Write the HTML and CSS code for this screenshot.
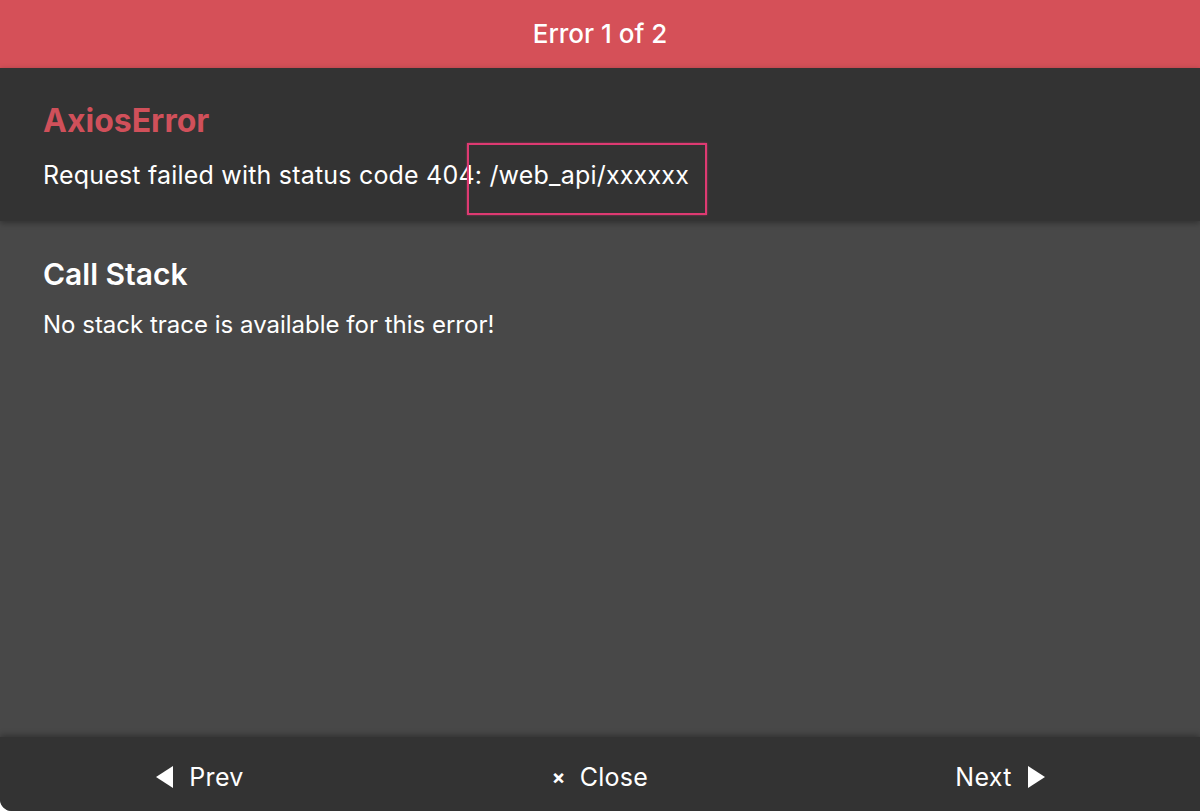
FILE: index.html
```html
<!DOCTYPE html>
<html>
<head>
<meta charset="utf-8">
<link rel="stylesheet" href="styles.css">
</head>
<body>
<div class="overlay">
  <header class="header">Error 1 of 2</header>
  <section class="error-info">
    <h1 class="error-name">AxiosError</h1>
    <p class="error-message">Request failed with status code 404: /web_api/xxxxxx</p>
    <div class="highlight"></div>
  </section>
  <section class="stack">
    <h2 class="stack-title">Call Stack</h2>
    <p class="stack-text">No stack trace is available for this error!</p>
  </section>
  <footer class="footer">
    <button class="nav-btn"><span class="tri tri-left"></span>Prev</button>
    <button class="nav-btn"><span class="times">×</span>Close</button>
    <button class="nav-btn">Next<span class="tri tri-right"></span></button>
  </footer>
</div>
</body>
</html>
```
FILE: styles.css
```css
html, body {
  margin: 0;
  padding: 0;
  height: 100%;
  background: #ffffff;
}
body {
  font-family: Inter, "Liberation Sans", Arial, sans-serif;
  color: #ffffff;
}
.overlay {
  height: 811px;
  display: flex;
  flex-direction: column;
  background: #484848;
  border-bottom-left-radius: 12px;
  overflow: hidden;
}
.header {
  height: 68px;
  flex: none;
  background: #d55058;
  display: flex;
  align-items: center;
  justify-content: center;
  font-size: 26px;
  font-weight: 500;
  padding-bottom: 2px;
  box-sizing: border-box;
}
.error-info {
  position: relative;
  flex: none;
  height: 153px;
  box-sizing: border-box;
  background: #333333;
  padding: 34px 43px 0;
  box-shadow: 0 2px 6px rgba(0,0,0,0.35);
  z-index: 1;
}
.error-name {
  margin: 0;
  font-size: 32px;
  font-weight: 700;
  color: #d0505a;
  line-height: 38px;
}
.error-message {
  margin: 20px 0 0;
  font-size: 25px;
  letter-spacing: 0.2px;
  line-height: 30px;
}
.highlight {
  position: absolute;
  left: 467px;
  top: 75px;
  width: 236px;
  height: 68px;
  border: 2px solid #de3a72;
  box-shadow: 0 0 2px rgba(222,58,114,0.6);
}
.stack {
  flex: 1;
  padding: 35px 43px 0;
}
.stack-title {
  margin: 0;
  font-size: 30px;
  font-weight: 600;
  line-height: 36px;
}
.stack-text {
  margin: 19px 0 0;
  font-size: 24px;
  line-height: 28px;
}
.footer {
  flex: none;
  height: 74px;
  background: #333333;
  box-shadow: 0 -2px 6px rgba(0,0,0,0.3);
  display: grid;
  grid-template-columns: 1fr 1fr 1fr;
  align-items: center;
  padding-top: 6px;
  box-sizing: border-box;
}
.nav-btn {
  background: none;
  border: none;
  color: #ffffff;
  font-family: Inter, "Liberation Sans", Arial, sans-serif;
  font-size: 25px;
  letter-spacing: 0.3px;
  display: flex;
  align-items: center;
  justify-content: center;
  gap: 16px;
  padding: 0;
}
.tri {
  width: 0;
  height: 0;
  border-top: 11px solid transparent;
  border-bottom: 11px solid transparent;
}
.tri-left {
  border-right: 17px solid #ffffff;
}
.tri-right {
  border-left: 17px solid #ffffff;
}
.times {
  font-size: 20px;
  font-weight: bold;
  margin-right: -2px;
}
```
